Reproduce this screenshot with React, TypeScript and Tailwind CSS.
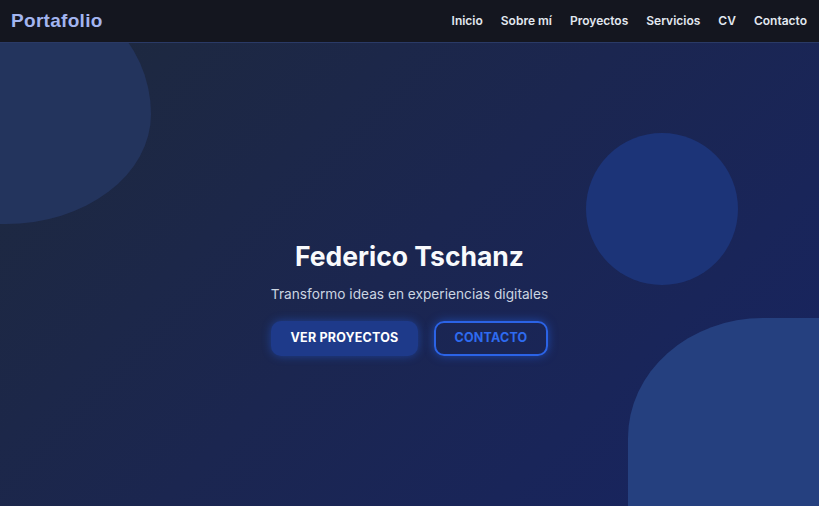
import React from "react";

export default function App() {
  const links = ["Inicio", "Sobre mí", "Proyectos", "Servicios", "CV", "Contacto"];
  return (
    <div className="relative w-[819px] h-[506px] overflow-hidden bg-[linear-gradient(135deg,#1e293b_0%,#1b2650_50%,#172462_100%)] font-['Inter',sans-serif]">
      {/* blobs */}
      <div className="absolute left-[-140px] top-[-20px] w-[291px] h-[244px] rounded-[50%_50%_50%_50%/50%_55%_45%_50%] bg-[#24355f] opacity-95" />
      <div className="absolute left-[586px] top-[133px] w-[152px] h-[152px] rounded-full bg-[#1c3478]" />
      <div className="absolute left-[628px] top-[318px] w-[280px] h-[300px] rounded-[135px_60px_0_0/120px_30px_0_0] bg-[#25407f]" />

      {/* navbar */}
      <nav className="relative z-10 h-[43px] flex items-center justify-between pl-[11px] pr-[12px] bg-[#14161f] border-b border-[#2a3a66]">
        <span className="font-['Liberation_Sans',sans-serif] font-bold text-[19px] text-[#a3b5f0] tracking-[0.3px]">Portafolio</span>
        <ul className="flex items-center gap-[18px] text-[12px] font-semibold text-[#e2e8f0]">
          {links.map((l) => (
            <li key={l}>{l}</li>
          ))}
        </ul>
      </nav>

      {/* hero */}
      <div className="relative z-10 flex flex-col items-center pt-[197px]">
        <h1 className="text-[26.5px] leading-[32px] font-bold text-[#f8fafc]">Federico Tschanz</h1>
        <p className="mt-[13px] text-[13.7px] leading-[18px] text-[#cbd5e1]">Transformo ideas en experiencias digitales</p>
        <div className="mt-[18px] flex gap-[16px]">
          <button className="h-[35px] w-[147px] rounded-[10px] bg-[#1e3a8a] text-white text-[12.5px] font-bold tracking-[0.2px] shadow-[0_0_10px_rgba(37,99,235,0.45)]">
            VER PROYECTOS
          </button>
          <button className="h-[35px] w-[114px] rounded-[10px] border-2 border-[#2b63e6] text-[#2e6bf0] text-[12.5px] font-bold tracking-[0.2px] shadow-[0_0_10px_rgba(37,99,235,0.55)]">
            CONTACTO
          </button>
        </div>
      </div>
    </div>
  );
}
